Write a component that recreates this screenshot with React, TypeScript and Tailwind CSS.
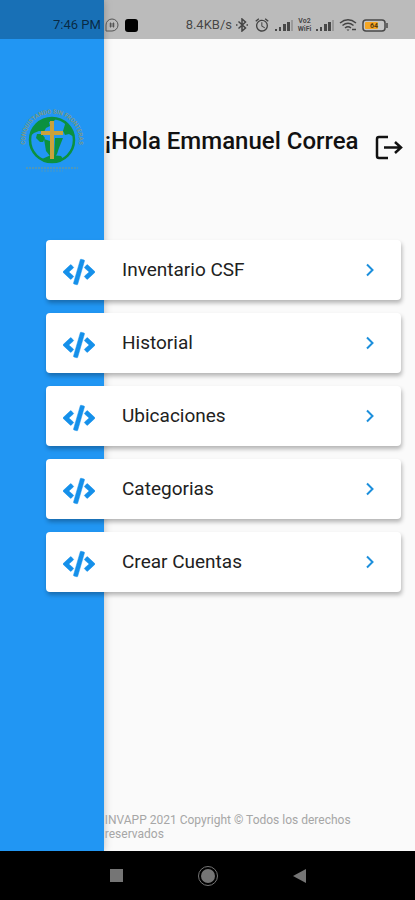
import React from "react";
import { FaCode } from "react-icons/fa";
import { MdAlarm } from "react-icons/md";

const items = ["Inventario CSF", "Historial", "Ubicaciones", "Categorias", "Crear Cuentas"];

function Signal() {
  return (
    <svg className="h-3 w-[18px] shrink-0" viewBox="0 0 18 12" fill="#484848" aria-hidden="true">
      <rect x="0" y="10" width="2" height="2" />
      <rect x="4" y="8" width="2" height="4" />
      <rect x="8" y="5" width="3" height="7" />
      <rect x="12" y="3" width="3" height="9" />
      <rect x="16" y="1" width="2" height="11" fill="#9a9a9a" />
    </svg>
  );
}

function StatusBar() {
  return (
    <header className="relative flex h-[39px] shrink-0 items-end justify-between bg-black/25 pr-[27px] pb-1 pl-[53px] text-[13px] leading-5 text-black/65">
      <div className="flex items-center gap-1">
        <span>7:46 PM</span>
        <svg className="h-[14px] w-[14px]" viewBox="0 0 14 14" fill="none" stroke="#555" aria-hidden="true">
          <path d="M1 13V7a6 6 0 1 1 6 6H1Z" />
          <path d="M5.500 4.500v5M8.500 4.500v5M4.500 6h5M4.500 8h5" />
        </svg>
        <span className="ml-[2px] h-[13px] w-[13px] rounded-[3px] bg-black" />
      </div>
      <div className="flex items-center gap-[3px]">
        <span>8.4KB/s</span>
        <svg className="h-[14px] w-[14px]" viewBox="0 0 14 14" fill="none" stroke="#444" strokeWidth="1.500" aria-hidden="true">
          <path d="M3.500 3.500 10.500 10 7 13V1l3.500 3-7 6.500" />
          <path d="M1 7h1.500M11.500 7H13" />
        </svg>
        <MdAlarm className="mx-[2px] h-4 w-4" />
        <Signal />
        <span className="flex w-[17px] flex-col items-center text-[7px] leading-[8px] font-bold">
          <span>Vo2</span>
          <span>WiFi</span>
        </span>
        <Signal />
        <svg className="mx-[2px] h-[14px] w-[18px]" viewBox="0 0 18 14" fill="none" stroke="#444" strokeWidth="1.500" aria-hidden="true">
          <path d="M1 5q8-6.500 16 0M3.500 7.500q5.500-4.500 11 0M6 10q3-2.500 6 0" />
          <path d="M7.500 11.500h3L9 13Z" fill="#444" stroke="none" />
          <path d="M13 11.500h4" />
        </svg>
        <svg className="h-[13px] w-[26px]" viewBox="0 0 26 13" aria-hidden="true">
          <rect x="1" y="1" width="22" height="11" rx="3" fill="#c6c6c6" stroke="#484848" strokeWidth="1.500" />
          <rect x="3" y="3" width="13" height="7" rx="1" fill="#f5a623" />
          <path d="M25 4v5" stroke="#484848" strokeWidth="1.500" />
          <text x="12" y="9" textAnchor="middle" fontSize="7" fontWeight="700" fill="#5a3d10">
            64
          </text>
        </svg>
      </div>
    </header>
  );
}

function Logo() {
  return (
    <svg className="h-16 w-16 shrink-0 overflow-visible" viewBox="0 0 64 64" role="img" aria-label="Logo CSF">
      <defs>
        <path id="ring" d="M8 44A27 27 0 1 1 56 44" />
        <clipPath id="globe">
          <circle cx="32" cy="31" r="22" />
        </clipPath>
      </defs>
      <text fontSize="6" fontWeight="700" fill="#7d9a80">
        <textPath href="#ring" startOffset="50%" textAnchor="middle">
          CONQUISTANDO SIN FRONTERAS
        </textPath>
      </text>
      <g clipPath="url(#globe)" fill="#0b9140">
        <path d="M10 20 17 12 26 8 37 8 34 12 29 13 30 17 26 19 24 23 19 22 14 24 9 28Z" />
        <path d="M17 25l5 0 3 4-2 4-3 0-4-4Z" />
        <path d="M46 12l5 5 3 7 0 4-5-3-4 1-2-4Z" />
        <path d="M35 29l8 0-2 5-2 5-2 6-3 4Z" />
        <path d="M24 30l6 2v15l-4-5Z" />
        <path d="M22 50l9-4 10 1 2 3-10 5Z" />
      </g>
      <circle cx="32" cy="31" r="22" fill="none" stroke="#0b9140" strokeWidth="2.500" />
      <path d="M30 12h4v10h9v4h-9v24h-4V26h-9v-4h9Z" fill="#c9a23c" />
      <path d="M6 59h52" stroke="#5f99a8" strokeWidth="1.500" strokeDasharray="2 1" />
      <path d="M21 62h22" stroke="#4a98c4" strokeDasharray="2 1" />
    </svg>
  );
}

export default function App() {
  return (
    <div className="flex min-h-screen flex-col bg-[#fafafa] font-['Roboto','Noto_Sans',sans-serif] text-[#212121]">
      <div className="relative flex flex-1 flex-col">
        <div className="absolute inset-y-0 left-0 w-1/4 bg-[#2196f3] shadow-[0_0_8px_rgba(0,0,0,0.25)]" />
        <StatusBar />

        <main className="relative flex flex-1 flex-col">
          <div className="flex items-center pt-[70px]">
            <div className="flex w-1/4 shrink-0 justify-center">
              <Logo />
            </div>
            <h1 className="flex-1 pl-px text-2xl font-medium whitespace-nowrap text-[#111]">¡Hola Emmanuel Correa</h1>
            <button type="button" aria-label="Cerrar sesión" className="mt-3 mr-3 shrink-0">
              <svg className="h-7 w-7" viewBox="0 0 28 28" fill="none" stroke="#111" strokeWidth="2.500" aria-hidden="true">
                <path d="M13 4H4q-2 0-2 2v17q0 2 2 2h9M9 14.500h17M20 9l6 5.500-6 5.500" />
              </svg>
            </button>
          </div>

          <nav className="mt-[67px] flex flex-col gap-[13px] pr-[14px] pl-[46px]">
            {items.map((label) => (
              <button
                key={label}
                type="button"
                className="flex h-[60px] items-center rounded-[4px] bg-white pr-5 pl-[17px] text-left shadow-[1px_3px_4px_rgba(0,0,0,0.28)]"
              >
                <FaCode className="mt-1 h-8 w-8 stroke-[#1590ea] stroke-[10px] text-[#1590ea]" />
                <span className="ml-[27px] flex-1 text-[19px] leading-6">{label}</span>
                <svg className="h-6 w-6" viewBox="0 0 24 24" fill="none" stroke="#1c8fdc" strokeWidth="2" aria-hidden="true">
                  <path d="M10 6.500 15.500 12 10 17.500" />
                </svg>
              </button>
            ))}
          </nav>

          <footer className="mt-auto ml-[25%] pr-10 pb-[10px] pl-px text-xs leading-[14px] text-[#a6a6a6]">
            INVAPP 2021 Copyright © Todos los derechos reservados
          </footer>
        </main>
      </div>

      <nav className="flex h-[49px] shrink-0 items-center justify-center gap-[75px] bg-black">
        <button type="button" aria-label="Recientes" className="h-[13px] w-[13px] bg-[#757575]" />
        <button
          type="button"
          aria-label="Inicio"
          className="flex h-5 w-5 items-center justify-center rounded-full border border-[#757575]"
        >
          <span className="h-[14px] w-[14px] rounded-full bg-[#757575]" />
        </button>
        <button type="button" aria-label="Atrás">
          <svg className="h-[14px] w-[13px]" viewBox="0 0 13 14" fill="#757575" aria-hidden="true">
            <path d="M13 0v14L0 7Z" />
          </svg>
        </button>
      </nav>
    </div>
  );
}
